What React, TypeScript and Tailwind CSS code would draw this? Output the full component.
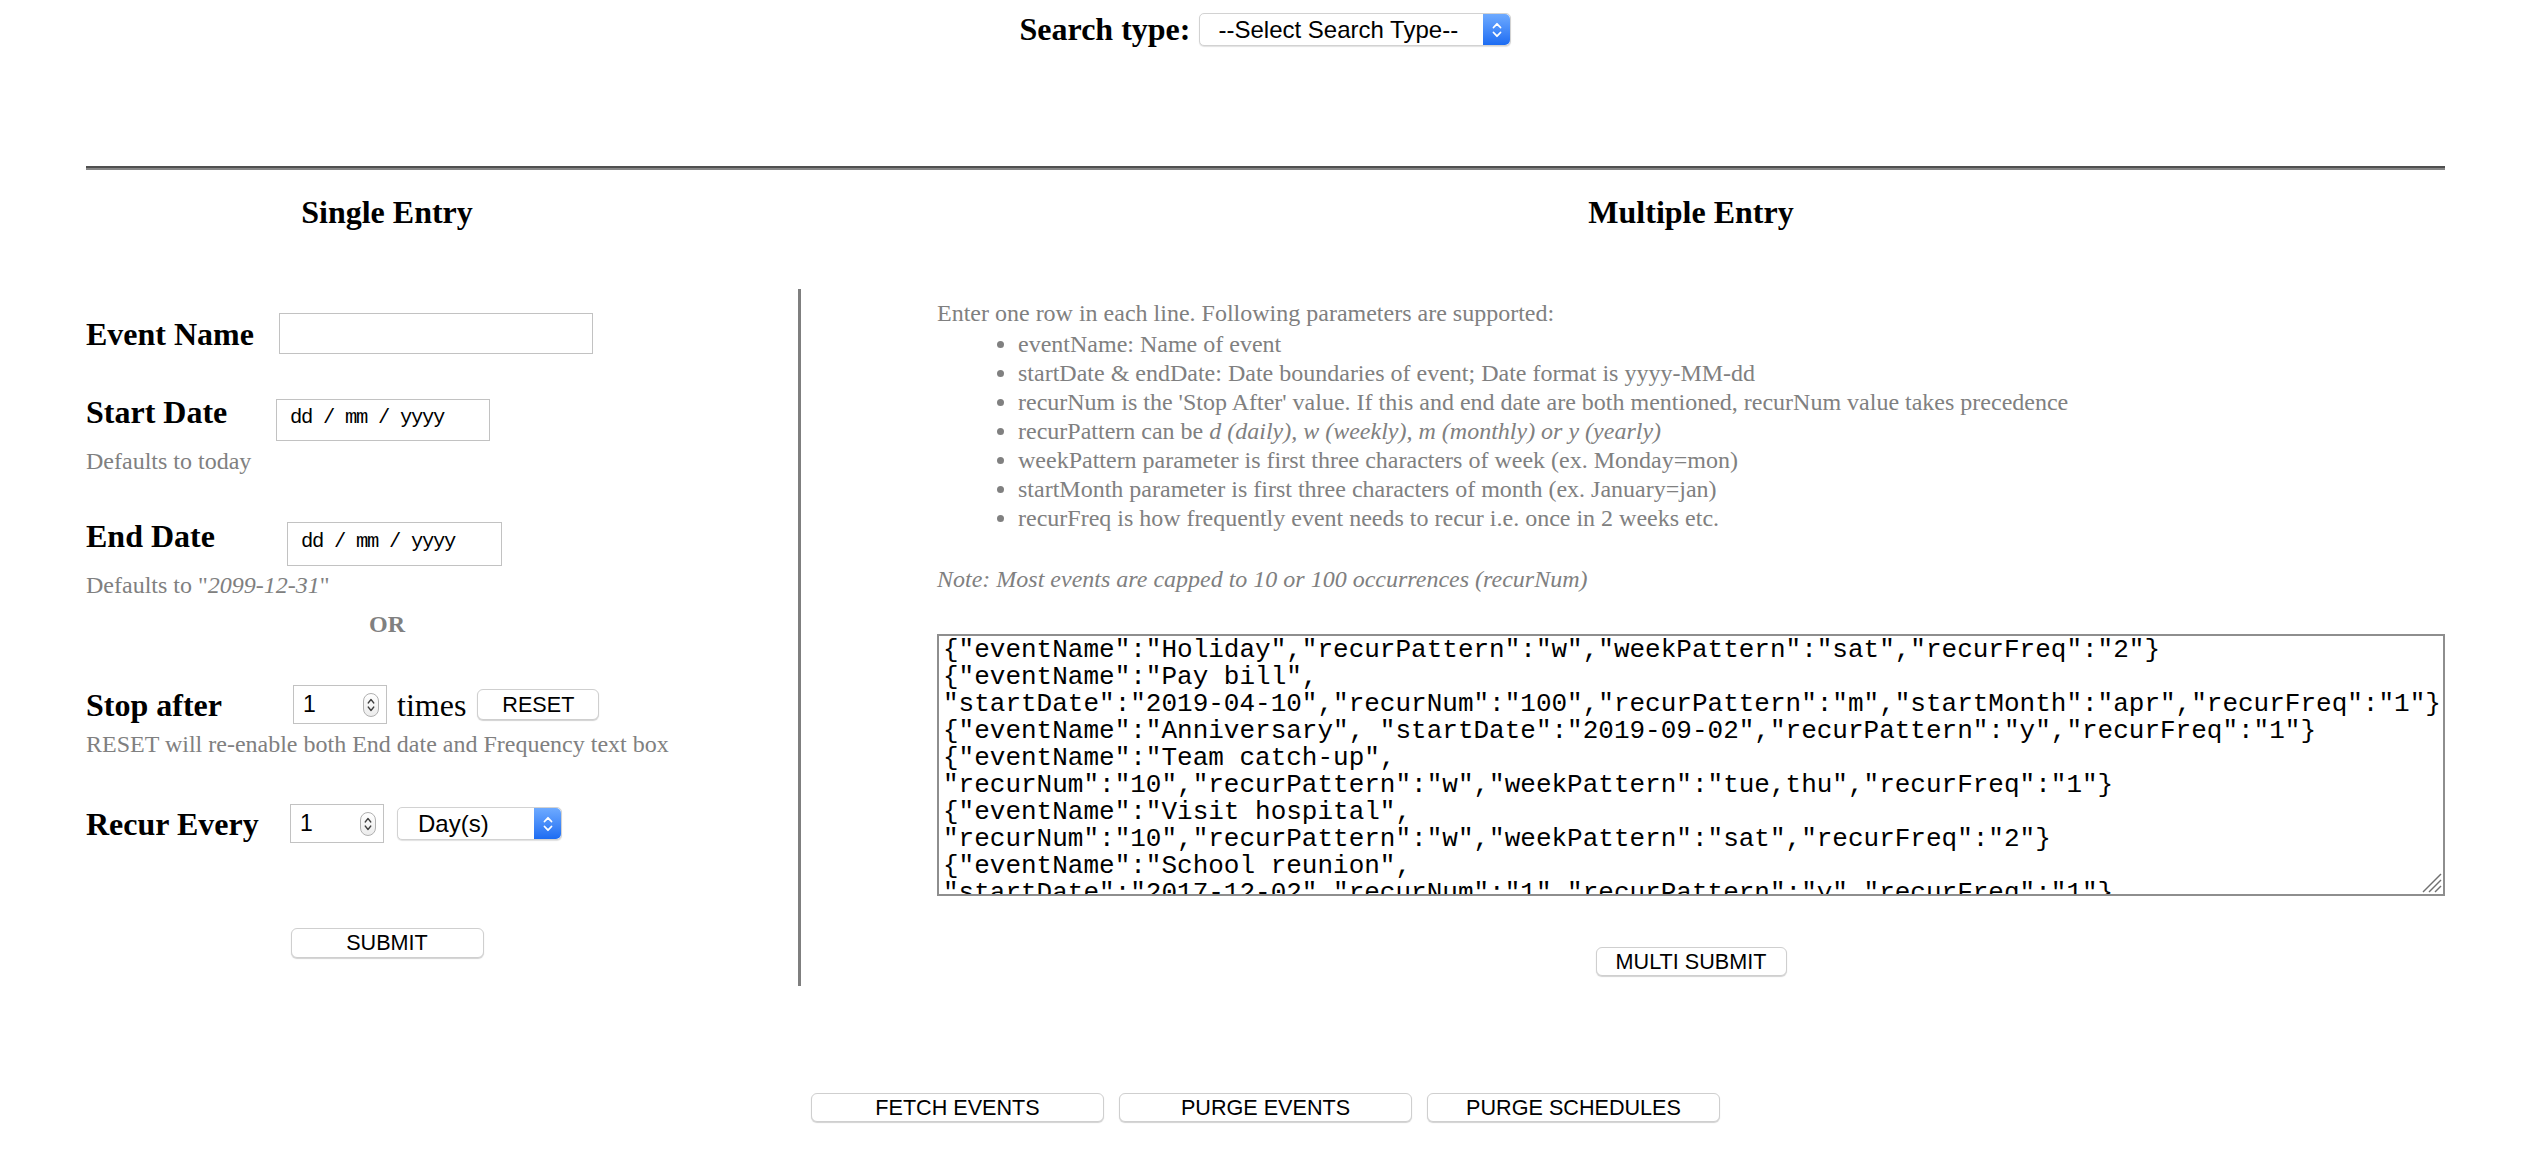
import React from "react";

const TEXTAREA_VALUE = [
  '{"eventName":"Holiday","recurPattern":"w","weekPattern":"sat","recurFreq":"2"}',
  '{"eventName":"Pay bill",',
  '"startDate":"2019-04-10","recurNum":"100","recurPattern":"m","startMonth":"apr","recurFreq":"1"}',
  '{"eventName":"Anniversary", "startDate":"2019-09-02","recurPattern":"y","recurFreq":"1"}',
  '{"eventName":"Team catch-up",',
  '"recurNum":"10","recurPattern":"w","weekPattern":"tue,thu","recurFreq":"1"}',
  '{"eventName":"Visit hospital",',
  '"recurNum":"10","recurPattern":"w","weekPattern":"sat","recurFreq":"2"}',
  '{"eventName":"School reunion",',
  '"startDate":"2017-12-02","recurNum":"1","recurPattern":"y","recurFreq":"1"}',
  '{"eventName":"Doctor visit",',
  '"startDate":"2019-05-01","recurNum":"10","recurPattern":"m","recurFreq":"1"}',
].join("\n");

function Btn({ className, children }: { className: string; children: React.ReactNode }) {
  return (
    <div
      className={
        "flex items-center justify-center bg-white border border-[#cfcfcf] rounded-[6px] shadow-[0_1px_1px_rgba(0,0,0,0.18)] font-['Liberation_Sans',Arial,sans-serif] text-[21.6px] text-black leading-none " +
        className
      }
    >
      {children}
    </div>
  );
}

function BlueSelect({ className, textClass, label }: { className: string; textClass: string; label: string }) {
  return (
    <div
      className={
        "flex items-stretch bg-white border border-[#d2d2d2] rounded-[5px] shadow-[0_1px_1px_rgba(0,0,0,0.12)] " + className
      }
    >
      <div
        className={
          "flex-1 flex items-center font-['Liberation_Sans',Arial,sans-serif] text-[24px] text-black leading-none " + textClass
        }
      >
        {label}
      </div>
      <div className="w-[27px] rounded-r-[5px] bg-gradient-to-b from-[#6eaaff] to-[#1c6cf2] flex items-center justify-center">
        <svg width="12" height="20" viewBox="0 0 12 20">
          <path d="M2.5 7.5 L6 3.8 L9.5 7.5" stroke="#fff" strokeWidth="1.8" fill="none" strokeLinecap="round" strokeLinejoin="round" />
          <path d="M2.5 12.5 L6 16.2 L9.5 12.5" stroke="#fff" strokeWidth="1.8" fill="none" strokeLinecap="round" strokeLinejoin="round" />
        </svg>
      </div>
    </div>
  );
}

function NumberBox() {
  return (
    <div className="w-[94px] h-[39px] border border-[#c2c2c2] bg-white flex items-center justify-between pl-[9px] pr-[7px]">
      <span className="font-['Liberation_Sans',Arial,sans-serif] text-[23px] leading-none text-black">1</span>
      <div className="w-[16px] h-[24px] rounded-full border border-[#b0b0b0] bg-gradient-to-b from-white to-[#ececec] flex items-center justify-center">
        <svg width="10" height="20" viewBox="0 0 10 20">
          <path d="M2.2 8 L5 4.5 L7.8 8" stroke="#3f3f3f" strokeWidth="1.3" fill="none" strokeLinecap="round" strokeLinejoin="round" />
          <path d="M2.2 12 L5 15.5 L7.8 12" stroke="#3f3f3f" strokeWidth="1.3" fill="none" strokeLinecap="round" strokeLinejoin="round" />
        </svg>
      </div>
    </div>
  );
}

function DateBox({ className }: { className: string }) {
  return (
    <div className={"border border-[#c2c2c2] bg-white flex items-center pl-[13px] pb-[3px] " + className}>
      <span className="font-['Liberation_Mono','Courier_New',monospace] text-[20.5px] leading-none text-black tracking-[-1.3px]">
        dd / mm / yyyy
      </span>
    </div>
  );
}

export default function App() {
  return (
    <div className="w-[2531px] min-h-[1158px] bg-white text-black font-['Liberation_Serif','Times_New_Roman',serif]">
      {/* Search type row */}
      <div className="flex justify-center items-center pt-[13px] gap-[9px]">
        <span className="text-[32px] font-bold leading-[33px]">Search type:</span>
        <BlueSelect className="w-[312px] h-[33px]" textClass="pl-[18px]" label="--Select Search Type--" />
      </div>

      {/* horizontal rule */}
      <div className="mx-[86px] mt-[120px] border-t-2 border-t-[#4f4f4f] border-b-2 border-b-[#858585]" />

      {/* headings */}
      <div className="mx-[86px] flex h-[119px] pt-[18px]">
        <div className="w-[602px] text-center text-[32px] font-bold leading-normal">Single Entry</div>
        <div className="w-[249px]" />
        <div className="w-[1508px] text-center text-[32px] font-bold leading-normal">Multiple Entry</div>
      </div>

      {/* body */}
      <div className="mx-[86px] flex">
        {/* Single entry column */}
        <div className="w-[602px] flex flex-col">
          <div className="mt-[24px] h-[41px] flex items-center">
            <div className="w-[193px] text-[32px] font-bold leading-normal">Event Name</div>
            <div className="w-[314px] h-[41px] border border-[#c2c2c2] bg-white" />
          </div>

          <div className="mt-[41px] flex items-start">
            <div className="w-[190px] text-[32px] font-bold leading-[35px]">Start Date</div>
            <DateBox className="mt-[4px] w-[214px] h-[42px]" />
          </div>
          <div className="mt-[7px] text-[24px] leading-[27px] text-[#808080]">Defaults to today</div>

          <div className="mt-[44px] flex items-start">
            <div className="w-[201px] text-[32px] font-bold leading-[35px]">End Date</div>
            <DateBox className="mt-[3px] w-[215px] h-[44px]" />
          </div>
          <div className="mt-[6px] text-[24px] leading-[27px] text-[#808080]">
            Defaults to "<i>2099-12-31</i>"
          </div>
          <div className="mt-[12px] text-center text-[24px] leading-[27px] font-bold text-[#808080]">OR</div>

          <div className="mt-[47px] h-[39px] flex items-center">
            <div className="w-[207px] text-[32px] font-bold leading-normal">Stop after</div>
            <NumberBox />
            <span className="ml-[10px] text-[32px] leading-normal">times</span>
            <Btn className="ml-[11px] w-[122px] h-[31px]">RESET</Btn>
          </div>
          <div className="mt-[7px] text-[24px] leading-[27px] text-[#808080]">
            RESET will re-enable both End date and Frequency text box
          </div>

          <div className="mt-[46px] h-[39px] flex items-center">
            <div className="w-[204px] text-[32px] font-bold leading-normal">Recur Every</div>
            <NumberBox />
            <BlueSelect className="ml-[13px] w-[165px] h-[33px]" textClass="pl-[20px]" label="Day(s)" />
          </div>

          <div className="mt-[85px] flex justify-center">
            <Btn className="w-[193px] h-[30px]">SUBMIT</Btn>
          </div>
        </div>

        {/* divider */}
        <div className="w-[249px]">
          <div className="ml-[110px] w-[3px] h-[697px] bg-[#7f7f7f]" />
        </div>

        {/* Multiple entry column */}
        <div className="w-[1508px] flex flex-col text-[24px] leading-[29px] text-[#808080]">
          <div className="mt-[10px]">Enter one row in each line. Following parameters are supported:</div>
          <ul className="mt-[2px] pl-[81px] list-disc">
            <li>eventName: Name of event</li>
            <li>startDate &amp; endDate: Date boundaries of event; Date format is yyyy-MM-dd</li>
            <li>
              recurNum is the 'Stop After' value. If this and end date are both mentioned, recurNum value takes precedence
            </li>
            <li>
              recurPattern can be <i>d (daily), w (weekly), m (monthly) or y (yearly)</i>
            </li>
            <li>weekPattern parameter is first three characters of week (ex. Monday=mon)</li>
            <li>startMonth parameter is first three characters of month (ex. January=jan)</li>
            <li>recurFreq is how frequently event needs to recur i.e. once in 2 weeks etc.</li>
          </ul>
          <div className="mt-[32px] italic">Note: Most events are capped to 10 or 100 occurrences (recurNum)</div>

          <div className="relative mt-[40px] w-[1508px] h-[262px]">
            <textarea
              readOnly
              wrap="off"
              value={TEXTAREA_VALUE}
              className="block w-full h-full resize-none overflow-hidden border-2 border-[#8e8e8e] bg-white pl-[4px] pr-[4px] pt-[1px] font-['Liberation_Mono','Courier_New',monospace] text-[26px] leading-[27px] text-black outline-none"
            />
            <svg className="absolute right-[3px] bottom-[3px]" width="24" height="24" viewBox="0 0 24 24">
              <path d="M23 5 L5 23" stroke="#707070" strokeWidth="1.4" />
              <path d="M23 11 L11 23" stroke="#707070" strokeWidth="1.4" />
              <path d="M23 17 L17 23" stroke="#707070" strokeWidth="1.4" />
            </svg>
          </div>

          <div className="mt-[51px] flex justify-center">
            <Btn className="w-[191px] h-[29px]">MULTI SUBMIT</Btn>
          </div>
        </div>
      </div>

      {/* bottom buttons */}
      <div className="mt-[107px] flex justify-center gap-[15px]">
        <Btn className="w-[293px] h-[29px]">FETCH EVENTS</Btn>
        <Btn className="w-[293px] h-[29px]">PURGE EVENTS</Btn>
        <Btn className="w-[293px] h-[29px]">PURGE SCHEDULES</Btn>
      </div>
    </div>
  );
}
